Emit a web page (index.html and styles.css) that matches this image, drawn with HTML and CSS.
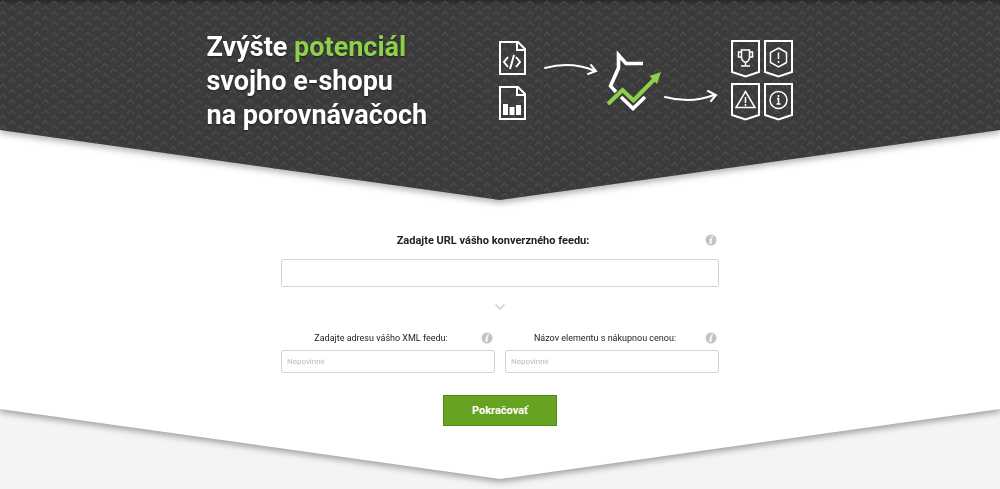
FILE: index.html
```html
<!DOCTYPE html>
<html lang="sk">
<head>
<meta charset="utf-8">
<meta name="viewport" content="width=device-width, initial-scale=1">
<title>Zvýšte potenciál svojho e-shopu</title>
<link rel="stylesheet" href="styles.css">
</head>
<body>
<header class="hero">
  <div class="hero-shape">
    <svg class="hero-pattern" aria-hidden="true">
      <defs>
        <pattern id="chevrons" width="17" height="10.4" patternUnits="userSpaceOnUse">
          <path d="M-.5 4.500l3.500-3.300 3.500 3.300M8 9.700l3.500-3.300 3.500 3.300" fill="none" stroke="#4e4e4e" stroke-width="1.100"/>
        </pattern>
      </defs>
      <rect width="100%" height="100%" fill="url(#chevrons)"/>
    </svg>
    <div class="hero-content">
      <h1 class="hero-title">Zvýšte <span class="accent">potenciál</span><br>svojho e-shopu<br>na porovnávačoch</h1>
      <svg class="hero-art" width="296" height="86" viewBox="498 38 296 86" fill="none" stroke="#fff" stroke-width="2" aria-hidden="true">
        <path d="M500 42h18l7 7v25h-25zM517 42v8h8M508 57l-4 5 4 5M516 57l4 5-4 5M514 55l-4 14"/>
        <path d="M500 87h18l7 7v25h-25zM517 87v8h8"/>
        <path d="M503 104h5v11h-5zM509.500 107h5v8h-5zM516 105h5v10h-5z" fill="#fff" stroke="none"/>
        <path d="M545 68q26-7 50 3M591 65l5 6-8 3" stroke-linecap="round"/>
        <path d="M643 63.500h-17l-7.500-8.500v13l-8 18 5.500 6M621 97l12 11.500 12-11.500" stroke-width="3.600" stroke-miterlimit="10"/>
        <g stroke="#8fd04a" stroke-width="4"><path d="M608 104l14.500-14 11 10.500 24-24.500"/><path d="M661 72l-11.500 4 7.500 8z" fill="#8fd04a" stroke="none"/></g>
        <path d="M665 97q26 7 49-2M708 91l8 4-5 6" stroke-linecap="round"/>
        <path d="M732 41h27v31l-13.500 4.500-13.500-4.500zM765 41h27v31l-13.500 4.500-13.500-4.500zM732 84h27v31l-13.500 4.500-13.500-4.500zM765 84h27v31l-13.500 4.500-13.500-4.500z"/>
        <g stroke-width="1.500">
          <path d="M741.500 50h8v7q0 4-4 5.500-4-1.500-4-5.500zM741 52h-2.500v5h3M750 52h2.500v5h-3M745.500 62v4M741 66h9"/>
          <path d="M778.500 48l8 4.500v10l-8 4.500-8-4.500v-10zM778.500 52.500v6.500M778.500 61v2"/>
          <path d="M745.500 91.500l9.500 16h-19zM745.500 97v6M745.500 104v2"/>
          <circle cx="778.500" cy="100" r="8.500"/><path d="M777 98.500h1.500v5.500M778.500 95v2M776.500 104h4"/>
        </g>
      </svg>
    </div>
  </div>
</header>
<main class="panel">
  <div class="panel-shape">
    <form class="form">
      <div class="field">
        <div class="field-head main-head"><label for="conversion-feed">Zadajte URL vášho konverzného feedu:</label>
          <button class="help" type="button" aria-label="Info"><svg viewBox="0 0 12 12"><circle cx="6" cy="6" r="5.500" fill="#c4c4c4"/><path d="M6.500 2h1.500l-.4 1.500H6.100zM4.700 4.400h2.500L6.200 8.500h.8l-.2.900H4.200l1-4h-.8z" fill="#fff"/></svg></button></div>
        <input class="input input-large" id="conversion-feed" type="text">
      </div>
      <svg class="divider" viewBox="0 0 10 6" fill="none" stroke="#ccc" stroke-width="1.300" aria-hidden="true"><path d="M.5.5L5 5 9.500.5"/></svg>
      <div class="columns">
        <div class="field">
          <div class="field-head"><label for="xml-feed">Zadajte adresu vášho XML feedu:</label>
            <button class="help" type="button" aria-label="Info"><svg viewBox="0 0 12 12"><circle cx="6" cy="6" r="5.500" fill="#c4c4c4"/><path d="M6.500 2h1.500l-.4 1.500H6.100zM4.700 4.400h2.500L6.200 8.500h.8l-.2.900H4.200l1-4h-.8z" fill="#fff"/></svg></button></div>
          <input class="input" id="xml-feed" type="text" placeholder="Nepovinné">
        </div>
        <div class="field">
          <div class="field-head"><label for="price-element">Názov elementu s nákupnou cenou:</label>
            <button class="help" type="button" aria-label="Info"><svg viewBox="0 0 12 12"><circle cx="6" cy="6" r="5.500" fill="#c4c4c4"/><path d="M6.500 2h1.500l-.4 1.500H6.100zM4.700 4.400h2.500L6.200 8.500h.8l-.2.900H4.200l1-4h-.8z" fill="#fff"/></svg></button></div>
          <input class="input" id="price-element" type="text" placeholder="Nepovinné">
        </div>
      </div>
      <button class="submit" type="submit">Pokračovať</button>
    </form>
  </div>
</main>
</body>
</html>
```
FILE: styles.css
```css
* { box-sizing: border-box; }
body {
  margin: 0;
  background: #f4f4f4;
  color: #222;
  font-family: Roboto, "Liberation Sans", sans-serif;
}
.hero {
  position: relative;
  z-index: 1;
  filter: drop-shadow(0 3px 3px rgba(0, 0, 0, .3));
}
.hero-shape,
.panel-shape {
  clip-path: polygon(0 0, 100% 0, 100% calc(100% - 70px), 50% 100%, 0 calc(100% - 70px));
}
.hero-shape {
  position: relative;
  padding: 30px 16px 68px;
  background: linear-gradient(#282828, #3b3b3b 5px);
}
.hero-pattern {
  position: absolute;
  inset: 0;
  width: 100%;
  height: 100%;
}
.hero-content {
  position: relative;
  display: flex;
  justify-content: space-between;
  gap: 24px;
  max-width: 587px;
  margin: 0 auto;
}
.hero-title {
  margin: 0;
  color: #fff;
  font-size: 27px;
  font-weight: 700;
  line-height: 34px;
  text-shadow: 0 1px 2px rgba(0, 0, 0, .5);
}
.accent { color: #8fd04a; }
.hero-art { flex: none; margin-top: 8px; }
.panel {
  margin-top: -80px;
  padding-bottom: 10px;
  filter: drop-shadow(0 3px 3px rgba(0, 0, 0, .35));
}
.panel-shape {
  padding: 112px 16px 53px;
  background: #fff;
}
.form {
  display: flex;
  flex-direction: column;
  align-items: center;
  max-width: 438px;
  margin: 0 auto;
}
.field { width: 100%; }
.field-head {
  display: grid;
  grid-template-columns: 1fr 14px;
  align-items: center;
  height: 16px;
  margin-bottom: 4px;
  font-size: 9px;
  text-align: center;
}
.main-head {
  margin-bottom: 11px;
  font-size: 11px;
  font-weight: 700;
}
.help {
  width: 12px;
  height: 12px;
  padding: 0;
  border: 0;
  background: none;
}
.help svg { display: block; }
.input {
  display: block;
  width: 100%;
  height: 23px;
  padding: 0 5px;
  border: 1px solid #d4d4d4;
  border-radius: 2px;
  background: #fff;
  font-family: inherit;
  font-size: 8px;
}
.input::placeholder { color: #bbb; opacity: 1; }
.input-large { height: 28px; font-size: 11px; }
.divider { width: 10px; margin: 17px 0 20px; }
.columns {
  display: grid;
  grid-template-columns: 1fr 1fr;
  gap: 10px;
  width: 100%;
}
.submit {
  height: 31px;
  margin-top: 22px;
  padding: 0 28px;
  border: 1px solid #4f8e10;
  background: #68a221;
  color: #fff;
  font-family: inherit;
  font-size: 11px;
  font-weight: 700;
}
```
